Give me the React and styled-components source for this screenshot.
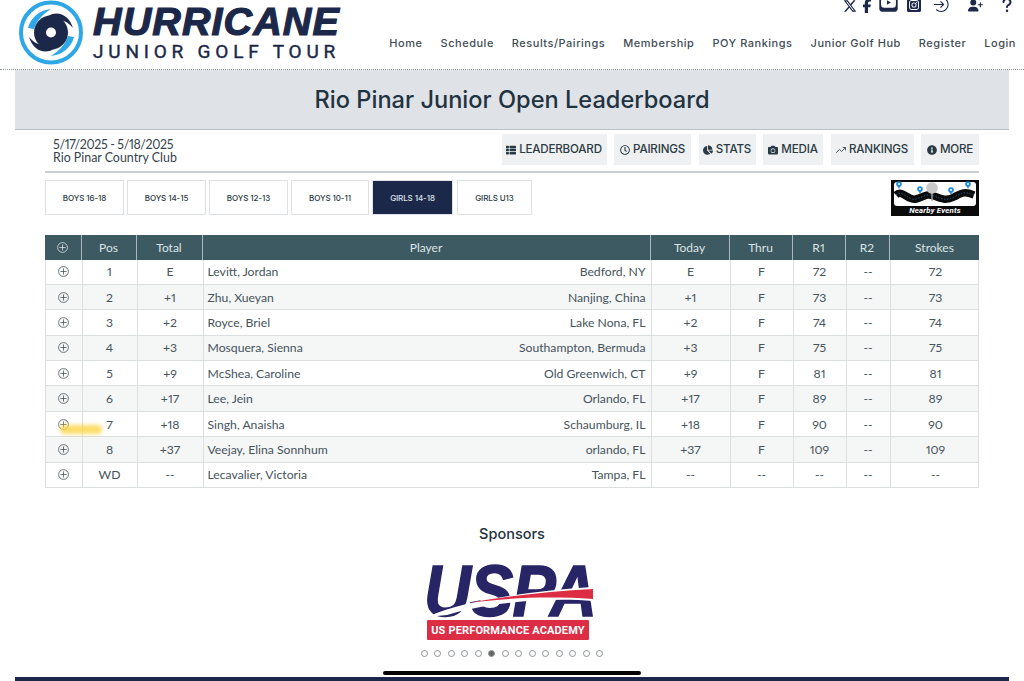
import React from 'react';
import styled, { createGlobalStyle } from 'styled-components';
import { FaXTwitter, FaFacebookF, FaSquareYoutube, FaUserPlus, FaQuestion } from 'react-icons/fa6';
import { FaInstagramSquare, FaRegClock, FaCamera, FaInfoCircle, FaChartPie, FaThList } from 'react-icons/fa';
import { FiTrendingUp } from 'react-icons/fi';

const Global = createGlobalStyle`
  html, body { margin: 0; padding: 0; background: #fff; }
  body { font-family: Lato, "Noto Sans", sans-serif; color: #35434b; font-variant-numeric: proportional-nums; }
`;

const Page = styled.div`
  position: relative;
  width: 1024px;
  height: 681px;
  overflow: hidden;
  display: flex;
  flex-direction: column;
`;

const Header = styled.header`
  height: 69px;
  flex: none;
  box-sizing: content-box;
  display: flex;
  justify-content: space-between;
  border-bottom: 1px dotted #8f979c;
`;

const Brand = styled.div`
  display: flex;
  align-items: flex-start;
  padding-left: 18px;
  gap: 9px;
`;

const BrandText = styled.div`
  display: flex;
  flex-direction: column;
  color: #1c2849;
`;

const BrandName = styled.span`
  font: italic 700 39.5px/36px "Liberation Sans", sans-serif;
  -webkit-text-stroke: 1.2px #1c2849;
  margin-top: 3px;
  letter-spacing: 1.1px;
`;

const BrandSub = styled.span`
  font: 400 19px/20px "Liberation Sans Narrow", Roboto, sans-serif;
  -webkit-text-stroke: 0.4px #1c2849;
  letter-spacing: 4.8px;
  margin-top: 3px;
  white-space: nowrap;
`;

const HeaderRight = styled.div`
  display: flex;
  flex-direction: column;
  align-items: flex-end;
  padding-right: 8px;
`;

const Social = styled.div`
  height: 13px;
  display: flex;
  align-items: flex-end;
  color: #1c2849;
  margin: 0 -3px 17px 0;
`;

const SocialIcon = styled.span`
  display: flex;
  justify-content: center;
  line-height: 0;
  width: ${p => p.$w}px;
  font-size: ${p => p.$s || 16}px;
`;

const Nav = styled.nav`
  display: flex;
  gap: 18px;
  margin-top: 5px;
`;

const NavLink = styled.a`
  font: 500 11px/16px Inter, sans-serif;
  letter-spacing: 0.52px;
  color: #3f4d55;
  white-space: nowrap;
`;

const Main = styled.main`
  margin: 0 15px;
  display: flex;
  flex-direction: column;
  flex: 1;
`;

const Banner = styled.div`
  height: 58px;
  padding-top: 1px;
  flex: none;
  background: #dfe2e7;
  border-bottom: 1px solid #b9bfc4;
  display: flex;
  align-items: center;
  justify-content: center;
  font: 500 23.6px/1 Inter, sans-serif;
  color: #1f3340;
`;

const Info = styled.div`
  margin: 4px 30px 0;
  height: 37px;
  display: flex;
  justify-content: space-between;
  border-bottom: 2px solid #c8cdd0;
`;

const EventMeta = styled.div`
  padding: 4px 0 0 8px;
  font-size: 12.4px;
  line-height: 13px;
  color: #35434b;
`;

const EventDate = styled.span`
  letter-spacing: -0.35px;
`;

const Tools = styled.div`
  display: flex;
  gap: 7.5px;
  height: 31px;
`;

const Tool = styled.a`
  display: flex;
  align-items: center;
  justify-content: center;
  gap: 3px;
  width: ${p => p.$w}px;
  background: #eef0f2;
  font: 500 11.6px/1 Inter, sans-serif;
  letter-spacing: -0.2px;
  color: #2c3a42;
  svg { font-size: 10px; color: #2a3a44; }
`;

const Groups = styled.div`
  margin: 7px 30px 0;
  height: 35px;
  display: flex;
  gap: 3px;
`;

const Group = styled.a`
  box-sizing: border-box;
  width: ${p => p.$w}px;
  margin-right: ${p => p.$mr || 0}px;
  display: flex;
  align-items: center;
  justify-content: center;
  border: 1px solid #dfe2e4;
  background: ${p => (p.$active ? '#1c2849' : '#fff')};
  color: ${p => (p.$active ? '#dfe3ea' : '#2c3a42')};
  font: 500 8px/1 Inter, sans-serif;
  letter-spacing: -0.1px;
`;

const Nearby = styled.div`
  margin-left: auto;
  width: 88px;
  height: 36px;
  background: #0b0b0b;
  display: flex;
  flex-direction: column;
  align-items: center;
  padding: 2px 3px 0;
  box-sizing: border-box;
`;

const NearbyPic = styled.div`
  width: 82px;
  height: 24px;
  background: #fff;
  border-radius: 3px;
  svg { display: block; overflow: visible; }
`;

const NearbyLabel = styled.span`
  font: italic 700 7.8px/10px Roboto, sans-serif;
  color: #fff;
  letter-spacing: 0.2px;
`;

const COLS = '36.5px 55px 66px 448px 79px 63px 53px 44px 90px';

const Board = styled.div`
  margin: 20px 30px 0;
  position: relative;
`;

const HeadRow = styled.div`
  display: grid;
  grid-template-columns: ${COLS};
  height: 24.5px;
  background: #3d5a63;
  color: #dbe3e5;
  font-size: 12px;
`;

const HeadCell = styled.div`
  display: flex;
  align-items: center;
  justify-content: center;
  border-right: 1px solid #a9babf;
  &:last-child { border-right: none; }
`;

const Row = styled.div`
  display: grid;
  grid-template-columns: ${COLS};
  height: 25.4px;
  box-sizing: border-box;
  background: ${p => (p.$alt ? '#f5f6f6' : '#fff')};
  border-bottom: 1px solid #dcdfe0;
  border-right: 1px solid #dcdfe0;
  border-left: 1px solid #dcdfe0;
  color: #46545c;
  font-size: 12.2px;
`;

const Cell = styled.div`
  display: flex;
  align-items: center;
  justify-content: center;
  border-right: 1px solid #dcdfe0;
  &:last-child { border-right: none; }
`;

const PlayerCell = styled.div`
  display: flex;
  align-items: center;
  justify-content: space-between;
  padding: 0 5px 0 4px;
  margin-bottom: -1px;
  z-index: 1;
  background: ${p => (p.$alt ? '#f5f6f6' : '#fff')};
  border-bottom: 1px solid #dcdfe0;
  border-right: 1px solid #dcdfe0;
`;

const Highlight = styled.div`
  position: absolute;
  left: 15px;
  top: 190px;
  width: 42px;
  height: 9px;
  background: #fbd64c;
  opacity: 0.85;
  filter: blur(2px);
  border-radius: 4px;
  z-index: 2;
`;

const Sponsors = styled.section`
  margin-top: 36px;
  display: flex;
  flex-direction: column;
  align-items: center;
`;

const SponsorsTitle = styled.h3`
  margin: 0;
  font: 500 14.5px/20px Inter, sans-serif;
  color: #1f3340;
`;

const Uspa = styled.div`
  position: relative;
  margin: 21px 4px 0 0;
  width: 166px;
  height: 76px;
`;

const UspaMark = styled.div`
  position: absolute;
  left: -17px;
  top: -2.5px;
  width: 200px;
  text-align: center;
  font: italic 700 73px/56px "Liberation Sans", sans-serif;
  -webkit-text-stroke: 1.5px #282566;
  color: #282566;
  transform: scaleX(0.89);
  letter-spacing: -1px;
`;

const UspaSwoosh = styled.svg`
  position: absolute;
  left: 0;
  top: 0;
`;

const UspaBar = styled.div`
  position: absolute;
  left: 0;
  top: 55px;
  width: 162px;
  height: 20px;
  border-radius: 1px;
  background: #dc2d45;
  color: #fff;
  display: flex;
  align-items: center;
  justify-content: center;
  font: 700 11px/1 Roboto, sans-serif;
  letter-spacing: 0.15px;
  white-space: nowrap;
`;

const Dots = styled.div`
  margin-top: 9px;
  display: flex;
  gap: 6.5px;
`;

const Dot = styled.span`
  box-sizing: border-box;
  width: 7px;
  height: 7px;
  border-radius: 50%;
  border: 1px solid #8e9496;
  background: ${p => (p.$on ? '#666' : '#fff')};
`;

const Footer = styled.footer`
  position: absolute;
  left: 15px;
  right: 15px;
  bottom: 0;
  height: 4px;
  background: #1c2849;
`;

const HomeBar = styled.div`
  position: absolute;
  left: 383px;
  top: 671px;
  width: 258px;
  height: 4px;
  border-radius: 2px;
  background: #050505;
`;

const Plus = () => (
  <svg width="11" height="11" viewBox="0 0 11 11" fill="none" stroke="currentColor" strokeWidth="0.8">
    <circle cx="5.5" cy="5.5" r="4.9" />
    <path d="M5.5 2.4v6.2M2.4 5.5h6.2" />
  </svg>
);

const CircleArrow = () => (
  <svg width="17" height="17" viewBox="0 0 17 17" fill="none" stroke="currentColor" strokeWidth="1.1">
    <path d="M3.2 3.5A7 7 0 1 1 3.2 13.5" />
    <path d="M1 8.5h9.5M7.5 5.4l3.1 3.1-3.1 3.1" />
  </svg>
);

const HurricaneMark = () => (
  <svg width="66" height="65" viewBox="0 0 66 65">
    <circle cx="33" cy="32.5" r="30" fill="#fff" stroke="#2ea7e6" strokeWidth="4" />
    <path d="M10 28C13 17 22 10 33 9 25 14 19 20 16 29Z" fill="#2ea7e6" />
    <path d="M56 37C53 48 44 55 33 56 41 51 47 45 50 36Z" fill="#2ea7e6" />
    <path d="M30 16C40 10 51 15 55 28 50 22 45 20 40 20Z" fill="#1c2849" />
    <path d="M36 49C26 55 15 50 11 37 16 43 21 45 26 45Z" fill="#1c2849" />
    <circle cx="33" cy="32.5" r="17" fill="#1c2849" />
    <circle cx="33" cy="32.5" r="5" fill="#fff" />
  </svg>
);

const RoadPic = () => (
  <svg width="82" height="24" viewBox="0 0 82 24">
    <path d="M2 13C8 7 14 19 22 17S32 11 40 14 52 19 60 15 70 9 80 13" fill="none" stroke="#0b0b0b" strokeWidth="7.5" />
    <path d="M2 13C8 7 14 19 22 17S32 11 40 14 52 19 60 15 70 9 80 13" fill="none" stroke="#3d9be0" strokeWidth="0.5" strokeDasharray="1.5 1.5" />
    {[[5, 1], [26, 6], [57, 7], [74, 1]].map(([x, y]) => (
      <g key={x}>
        <path d={`M${x - 2} ${y + 2}L${x} ${y + 6}L${x + 2} ${y + 2}Z`} fill="#1f8ad8" />
        <circle cx={x} cy={y + 1} r="2.8" fill="#1f8ad8" />
        <circle cx={x} cy={y + 1} r="1" fill="#fff" />
      </g>
    ))}
    <path d="M38 10v9" stroke="#aaa" strokeWidth="1.4" />
    <circle cx="38" cy="6" r="5.8" fill="#c9c9c9" />
  </svg>
);

const navItems = ['Home', 'Schedule', 'Results/Pairings', 'Membership', 'POY Rankings', 'Junior Golf Hub', 'Register', 'Login'];

const tools = [
  { name: 'LEADERBOARD', icon: FaThList, w: 105 },
  { name: 'PAIRINGS', icon: FaRegClock, w: 77 },
  { name: 'STATS', icon: FaChartPie, w: 57 },
  { name: 'MEDIA', icon: FaCamera, w: 60 },
  { name: 'RANKINGS', icon: FiTrendingUp, w: 83 },
  { name: 'MORE', icon: FaInfoCircle, w: 58 },
];

const groups = [
  { name: 'BOYS 16-18', w: 79 },
  { name: 'BOYS 14-15', w: 79 },
  { name: 'BOYS 12-13', w: 79 },
  { name: 'BOYS 10-11', w: 78 },
  { name: 'GIRLS 14-18', w: 81, active: true, mr: 1 },
  { name: 'GIRLS U13', w: 75 },
];

const players = [
  ['1', 'E', 'Levitt, Jordan', 'Bedford, NY', 'E', 'F', '72', '--', '72'],
  ['2', '+1', 'Zhu, Xueyan', 'Nanjing, China', '+1', 'F', '73', '--', '73'],
  ['3', '+2', 'Royce, Briel', 'Lake Nona, FL', '+2', 'F', '74', '--', '74'],
  ['4', '+3', 'Mosquera, Sienna', 'Southampton, Bermuda', '+3', 'F', '75', '--', '75'],
  ['5', '+9', 'McShea, Caroline', 'Old Greenwich, CT', '+9', 'F', '81', '--', '81'],
  ['6', '+17', 'Lee, Jein', 'Orlando, FL', '+17', 'F', '89', '--', '89'],
  ['7', '+18', 'Singh, Anaisha', 'Schaumburg, IL', '+18', 'F', '90', '--', '90'],
  ['8', '+37', 'Veejay, Elina Sonnhum', 'orlando, FL', '+37', 'F', '109', '--', '109'],
  ['WD', '--', 'Lecavalier, Victoria', 'Tampa, FL', '--', '--', '--', '--', '--'],
];

export default function App() {
  return (
    <Page>
      <Global />
      <Header>
        <Brand>
          <HurricaneMark />
          <BrandText>
            <BrandName>HURRICANE</BrandName>
            <BrandSub>JUNIOR GOLF TOUR</BrandSub>
          </BrandText>
        </Brand>
        <HeaderRight>
          <Social>
            <SocialIcon $w={17} $s={14}><FaXTwitter /></SocialIcon>
            <SocialIcon $w={17} $s={14}><FaFacebookF /></SocialIcon>
            <SocialIcon $w={26} $s={21}><FaSquareYoutube /></SocialIcon>
            <SocialIcon $w={26} $s={16}><FaInstagramSquare /></SocialIcon>
            <SocialIcon $w={28}><CircleArrow /></SocialIcon>
            <SocialIcon $w={40} $s={15}><FaUserPlus /></SocialIcon>
            <SocialIcon $w={24} $s={16}><FaQuestion /></SocialIcon>
          </Social>
          <Nav>
            {navItems.map(item => <NavLink key={item}>{item}</NavLink>)}
          </Nav>
        </HeaderRight>
      </Header>
      <Main>
        <Banner>Rio Pinar Junior Open Leaderboard</Banner>
        <Info>
          <EventMeta>
            <EventDate>5/17/2025 - 5/18/2025</EventDate><br />
            Rio Pinar Country Club
          </EventMeta>
          <Tools>
            {tools.map(t => (
              <Tool key={t.name} $w={t.w}>
                <t.icon />
                {t.name}
              </Tool>
            ))}
          </Tools>
        </Info>
        <Groups>
          {groups.map(g => (
            <Group key={g.name} $w={g.w} $active={g.active} $mr={g.mr}>{g.name}</Group>
          ))}
          <Nearby>
            <NearbyPic><RoadPic /></NearbyPic>
            <NearbyLabel>Nearby Events</NearbyLabel>
          </Nearby>
        </Groups>
        <Board>
          <HeadRow>
            <HeadCell><Plus /></HeadCell>
            <HeadCell>Pos</HeadCell>
            <HeadCell>Total</HeadCell>
            <HeadCell>Player</HeadCell>
            <HeadCell>Today</HeadCell>
            <HeadCell>Thru</HeadCell>
            <HeadCell>R1</HeadCell>
            <HeadCell>R2</HeadCell>
            <HeadCell>Strokes</HeadCell>
          </HeadRow>
          {players.map(([pos, total, name, home, today, thru, r1, r2, strokes], i) => (
            <Row key={name} $alt={i % 2 === 1}>
              <Cell><Plus /></Cell>
              <Cell>{pos}</Cell>
              <Cell>{total}</Cell>
              <PlayerCell $alt={i % 2 === 1}>
                <span>{name}</span>
                <span>{home}</span>
              </PlayerCell>
              <Cell>{today}</Cell>
              <Cell>{thru}</Cell>
              <Cell>{r1}</Cell>
              <Cell>{r2}</Cell>
              <Cell>{strokes}</Cell>
            </Row>
          ))}
          <Highlight />
        </Board>
        <Sponsors>
          <SponsorsTitle>Sponsors</SponsorsTitle>
          <Uspa>
            <UspaMark>USPA</UspaMark>
            <UspaSwoosh width="166" height="55" viewBox="0 0 166 55">
              <path d="M0 52C40 34 110 26 165 22L166 36C120 32 60 38 20 50Z" fill="#fff" />
              <path d="M41 38C80 31 125 26 166 24L166 34C120 31 80 33 41 38Z" fill="#dc2d45" />
            </UspaSwoosh>
            <UspaBar>US PERFORMANCE ACADEMY</UspaBar>
          </Uspa>
          <Dots>
            {Array.from({ length: 14 }, (_, i) => <Dot key={i} $on={i === 5} />)}
          </Dots>
        </Sponsors>
      </Main>
      <Footer />
      <HomeBar />
    </Page>
  );
}
